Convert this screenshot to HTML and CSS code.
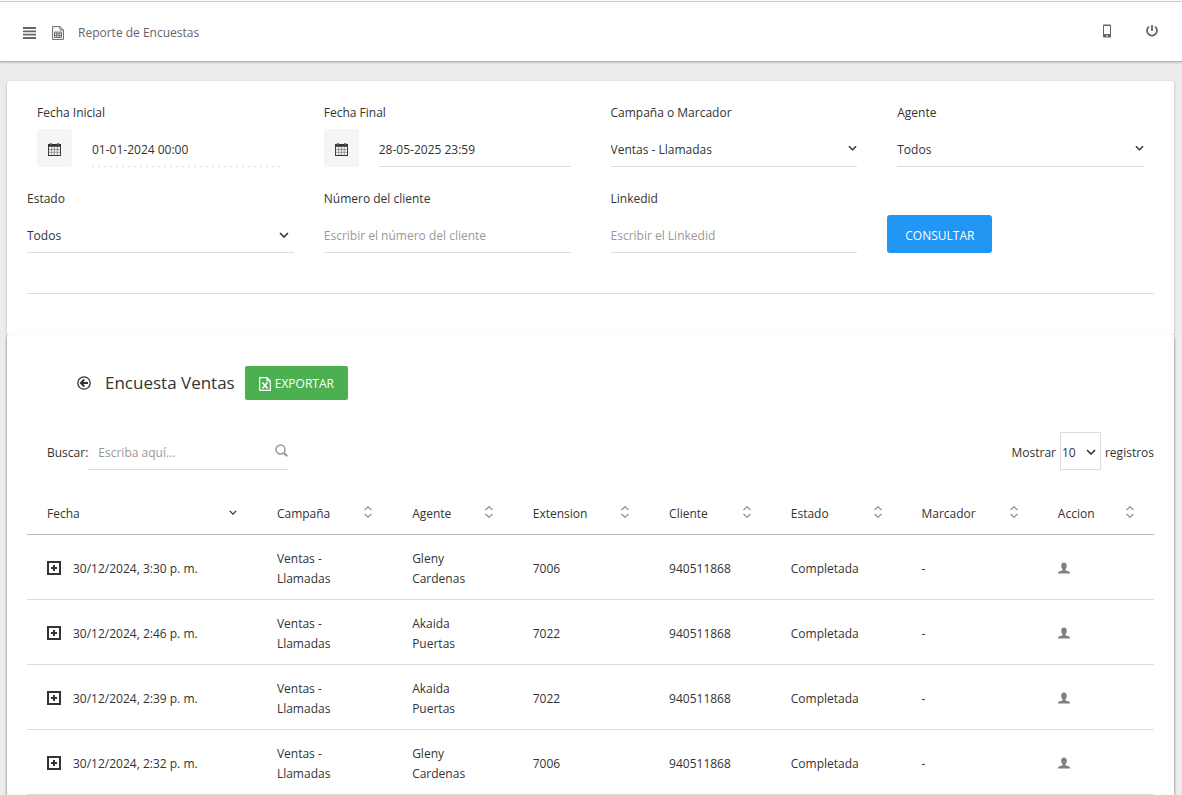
FILE: index.html
```
<!DOCTYPE html>
<html lang="es">
<head>
  <meta charset="UTF-8">
  <meta name="viewport" content="width=device-width, initial-scale=1.0">
  <title>Reporte de Encuestas</title>
  <link rel="stylesheet" href="styles.css">
</head>
<body>
  <!-- Icons -->
  <svg class="sprite" aria-hidden="true">
    <symbol id="calendar" viewBox="0 0 14 14">
      <path d="M0 1h14v13H0z M1 4v9h12V4z" fill="currentColor" fill-rule="evenodd"/>
      <path d="M3 0v3M11 0v3" stroke="currentColor" stroke-width="2"/>
      <path d="M3 0v2M11 0v2" stroke="#f5f5f5" stroke-width="0.6"/>
      <path d="M1 7h12M1 10h12M4 4v9M7 4v9M10 4v9" stroke="currentColor" stroke-width="0.8" opacity="0.6"/>
    </symbol>
    <symbol id="chevron" viewBox="0 0 10 6">
      <path d="M1 1l4 4 4-4" fill="none" stroke="currentColor" stroke-width="1.6"/>
    </symbol>
    <symbol id="sort" viewBox="0 0 8 12">
      <path d="M0.5 4L4 0.8 7.5 4M0.5 8L4 11.2 7.5 8" fill="none" stroke="currentColor" stroke-width="1.4"/>
    </symbol>
    <symbol id="plus-box" viewBox="0 0 14 14">
      <path d="M1 1h12v12H1z" fill="none" stroke="currentColor" stroke-width="2"/>
      <path d="M7 4v6M4 7h6" stroke="currentColor" stroke-width="2"/>
    </symbol>
    <symbol id="user" viewBox="0 0 12 12">
      <path d="M6 0.5c2 0 2.8 1.400 2.800 3.200 0 1.600-.6 2.800-1.400 3.500v1L11 9.500c.7.300 1 .8 1 2H0c0-1.200.3-1.700 1-2l3.600-1.300v-1C3.800 6.500 3.200 5.300 3.200 3.700 3.200 1.900 4 .5 6 .5z" fill="currentColor"/>
    </symbol>
  </svg>

  <header class="navbar">
    <button class="icon-btn" aria-label="Menú">
      <svg width="13" height="12" viewBox="0 0 13 12"><path d="M0 1h13M0 4.300h13M0 7.700h13M0 11h13" stroke="currentColor" stroke-width="1.800"/></svg>
    </button>
    <svg class="navbar-file" width="12" height="14" viewBox="0 0 12 14">
      <path d="M0.6 0.6h7.400l3.400 3.400v9.400H0.600z M8 0.600V4h3.400" fill="none" stroke="currentColor"/>
      <path d="M2.500 6h7v5.500h-7zM2.500 7.800h7M2.500 9.700h7M4.800 6v5.500M7.200 6v5.500" fill="none" stroke="currentColor" stroke-width="0.9"/>
    </svg>
    <span class="navbar-title">Reporte de Encuestas</span>
    <nav class="navbar-right">
      <button class="icon-btn" aria-label="Teléfono">
        <svg width="10" height="14" viewBox="0 0 10 14"><path d="M2 0.500h6a1 1 0 0 1 1 1v11a1 1 0 0 1-1 1H2a1 1 0 0 1-1-1v-11a1 1 0 0 1 1-1zM2 2v8h6V2zM4.200 11.200v1.400h1.600v-1.400z" fill="currentColor" fill-rule="evenodd"/></svg>
      </button>
      <button class="icon-btn" aria-label="Salir">
        <svg width="14" height="14" viewBox="0 0 14 14"><path d="M7 1v6M4 2.600a5 5 0 1 0 6 0" fill="none" stroke="currentColor" stroke-width="1.800"/></svg>
      </button>
    </nav>
  </header>

  <main class="content">
    <section class="card card-filters">
      <form class="filters">
        <div class="field">
          <label for="fecha-inicial">Fecha Inicial</label>
          <div class="date-group">
            <button type="button" class="date-btn" aria-label="Elegir fecha inicial"><svg width="13" height="13"><use href="#calendar"/></svg></button>
            <input class="input dashed" id="fecha-inicial" type="text" value="01-01-2024 00:00">
          </div>
        </div>
        <div class="field">
          <label for="fecha-final">Fecha Final</label>
          <div class="date-group">
            <button type="button" class="date-btn" aria-label="Elegir fecha final"><svg width="13" height="13"><use href="#calendar"/></svg></button>
            <input class="input" id="fecha-final" type="text" value="28-05-2025 23:59">
          </div>
        </div>
        <div class="field">
          <label for="campana">Campaña o Marcador</label>
          <div class="select">
            <select class="input" id="campana"><option>Ventas - Llamadas</option></select>
            <svg class="caret" width="9" height="6"><use href="#chevron"/></svg>
          </div>
        </div>
        <div class="field">
          <label for="agente">Agente</label>
          <div class="select">
            <select class="input" id="agente"><option>Todos</option></select>
            <svg class="caret" width="9" height="6"><use href="#chevron"/></svg>
          </div>
        </div>
        <div class="field field-wide">
          <label for="estado">Estado</label>
          <div class="select select-native">
            <select class="input" id="estado"><option>Todos</option></select>
            <svg class="caret" width="10" height="6"><use href="#chevron"/></svg>
          </div>
        </div>
        <div class="field">
          <label for="numero">Número del cliente</label>
          <input class="input" id="numero" type="text" placeholder="Escribir el número del cliente">
        </div>
        <div class="field">
          <label for="linkedid">Linkedid</label>
          <input class="input" id="linkedid" type="text" placeholder="Escribir el Linkedid">
        </div>
        <div class="field field-wide field-action">
          <button type="button" class="btn btn-primary">CONSULTAR</button>
        </div>
      </form>
      <hr>
    </section>

    <section class="card card-report">
      <div class="report-heading">
        <button class="icon-btn back" aria-label="Volver">
          <svg width="14" height="14" viewBox="0 0 14 14"><circle cx="7" cy="7" r="6.200" fill="none" stroke="currentColor" stroke-width="1.300"/><path d="M11 7H4M7.300 3.500L3.800 7l3.500 3.500" fill="none" stroke="currentColor" stroke-width="1.800"/></svg>
        </button>
        <h1>Encuesta Ventas</h1>
        <button class="btn btn-success">
          <svg width="12" height="14" viewBox="0 0 12 14"><path d="M0.700 0.700h7.300l3.300 3.300v9.300H0.700z M8 0.700V4h3.300" fill="none" stroke="currentColor" stroke-width="1.200"/><path d="M3.500 5.500l5 6M8.500 5.500l-5 6" stroke="currentColor" stroke-width="1.700"/></svg>
          EXPORTAR
        </button>
      </div>

      <div class="table-tools">
        <div class="search">
          <label for="buscar">Buscar:</label>
          <div class="search-box">
            <input class="input" id="buscar" type="text" placeholder="Escriba aquí...">
            <svg class="search-icon" width="13" height="13" viewBox="0 0 13 13"><circle cx="5.500" cy="5.500" r="4.500" fill="none" stroke="currentColor" stroke-width="1.500"/><path d="M8.800 8.800l3.400 3.400" stroke="currentColor" stroke-width="2"/></svg>
          </div>
        </div>
        <div class="length">
          <label for="mostrar">Mostrar</label>
          <div class="select select-native">
            <select class="input boxed" id="mostrar"><option>10</option></select>
            <svg class="caret" width="10" height="6"><use href="#chevron"/></svg>
          </div>
          <span>registros</span>
        </div>
      </div>

      <table>
        <colgroup>
          <col class="col-fecha"><col class="col-campana"><col class="col-agente"><col class="col-extension">
          <col class="col-cliente"><col class="col-estado"><col class="col-marcador"><col class="col-accion">
        </colgroup>
        <thead>
          <tr>
            <th><div class="th">Fecha <svg class="sorted" width="8" height="5"><use href="#chevron"/></svg></div></th>
            <th><div class="th">Campaña <svg width="8" height="12"><use href="#sort"/></svg></div></th>
            <th><div class="th">Agente <svg width="8" height="12"><use href="#sort"/></svg></div></th>
            <th><div class="th">Extension <svg width="8" height="12"><use href="#sort"/></svg></div></th>
            <th><div class="th">Cliente <svg width="8" height="12"><use href="#sort"/></svg></div></th>
            <th><div class="th">Estado <svg width="8" height="12"><use href="#sort"/></svg></div></th>
            <th><div class="th">Marcador <svg width="8" height="12"><use href="#sort"/></svg></div></th>
            <th><div class="th">Accion <svg width="8" height="12"><use href="#sort"/></svg></div></th>
          </tr>
        </thead>
        <tbody>
          <tr>
            <td><div class="date"><button class="icon-btn expand" aria-label="Ver detalle"><svg width="14" height="14"><use href="#plus-box"/></svg></button>30/12/2024, 3:30 p. m.</div></td>
            <td>Ventas - Llamadas</td>
            <td>Gleny Cardenas</td>
            <td>7006</td>
            <td>940511868</td>
            <td>Completada</td>
            <td>-</td>
            <td><button class="icon-btn user" aria-label="Ver cliente"><svg width="12" height="12"><use href="#user"/></svg></button></td>
          </tr>
          <tr>
            <td><div class="date"><button class="icon-btn expand" aria-label="Ver detalle"><svg width="14" height="14"><use href="#plus-box"/></svg></button>30/12/2024, 2:46 p. m.</div></td>
            <td>Ventas - Llamadas</td>
            <td>Akaida Puertas</td>
            <td>7022</td>
            <td>940511868</td>
            <td>Completada</td>
            <td>-</td>
            <td><button class="icon-btn user" aria-label="Ver cliente"><svg width="12" height="12"><use href="#user"/></svg></button></td>
          </tr>
          <tr>
            <td><div class="date"><button class="icon-btn expand" aria-label="Ver detalle"><svg width="14" height="14"><use href="#plus-box"/></svg></button>30/12/2024, 2:39 p. m.</div></td>
            <td>Ventas - Llamadas</td>
            <td>Akaida Puertas</td>
            <td>7022</td>
            <td>940511868</td>
            <td>Completada</td>
            <td>-</td>
            <td><button class="icon-btn user" aria-label="Ver cliente"><svg width="12" height="12"><use href="#user"/></svg></button></td>
          </tr>
          <tr>
            <td><div class="date"><button class="icon-btn expand" aria-label="Ver detalle"><svg width="14" height="14"><use href="#plus-box"/></svg></button>30/12/2024, 2:32 p. m.</div></td>
            <td>Ventas - Llamadas</td>
            <td>Gleny Cardenas</td>
            <td>7006</td>
            <td>940511868</td>
            <td>Completada</td>
            <td>-</td>
            <td><button class="icon-btn user" aria-label="Ver cliente"><svg width="12" height="12"><use href="#user"/></svg></button></td>
          </tr>
        </tbody>
      </table>
    </section>
  </main>
</body>
</html>
```
FILE: styles.css
```
* {
  box-sizing: border-box;
}

body {
  margin: 0;
  background: #ececec;
  color: #333;
  font-family: "Segoe UI", "Open Sans", "Noto Sans", sans-serif;
  font-size: 12px;
  line-height: 20px;
}

button, input, select {
  font: inherit;
  color: inherit;
}

svg {
  display: block;
  flex: none;
}

.sprite {
  position: absolute;
  width: 0;
  height: 0;
}

.icon-btn {
  display: flex;
  padding: 0;
  border: none;
  background: none;
  cursor: pointer;
}

/* Top bar */
.navbar {
  display: flex;
  align-items: center;
  height: 62px;
  padding: 4px 23px 0;
  background: #fff;
  color: #666;
  border-top: 1px solid #fafafa;
  border-bottom: 1px solid #b4b4b4;
  box-shadow: inset 0 1px 0 #ccc, 0 1px 2px rgba(0, 0, 0, 0.15);
}

.navbar-file {
  margin: 0 14px 0 16px;
}

.navbar-right {
  display: flex;
  gap: 33px;
  margin: 0 0 4px auto;
}

.content {
  padding: 19px 8px 0 7px;
}

/* Cards */
.card {
  padding: 0 20px;
  background: #fff;
  border-radius: 3px 3px 0 0;
}

.card hr {
  height: 1px;
  margin: 40px 0 0;
  border: none;
  background: #ddd;
}

.card-filters {
  padding-top: 22px;
  padding-bottom: 40px;
  box-shadow: 0 1px 3px rgba(0, 0, 0, 0.25);
}

.card-report {
  padding-top: 32px;
  box-shadow: 0 2px 3px rgba(0, 0, 0, 0.6);
}

/* Filters */
.filters {
  display: grid;
  grid-template-columns: repeat(4, 1fr);
  row-gap: 22px;
  margin: 0 -10px;
}

.field {
  display: flex;
  flex-direction: column;
  gap: 6px;
  min-width: 0;
  padding: 0 20px;
}

.field-wide {
  padding: 0 10px;
}

.field-action {
  align-items: flex-start;
  justify-content: flex-end;
}

.input {
  display: block;
  width: 100%;
  height: 38px;
  padding: 4px 0 0;
  border: none;
  border-bottom: 1px solid #ddd;
  border-radius: 0;
  background: none;
  outline: none;
  appearance: none;
}

.input::placeholder {
  color: #999;
  opacity: 1;
}

.input.dashed {
  border-bottom-color: transparent;
  background: repeating-linear-gradient(90deg, #ddd 0 2px, transparent 2px 6px) bottom / 100% 1px no-repeat border-box;
}

.date-group {
  display: flex;
  gap: 20px;
}

.date-btn {
  display: flex;
  flex: none;
  align-items: center;
  justify-content: center;
  width: 35px;
  height: 38px;
  padding: 2px 0 0;
  border: none;
  border-radius: 3px;
  background: #f5f5f5;
}

.select {
  position: relative;
}

.caret {
  position: absolute;
  top: 16px;
  right: 0;
  pointer-events: none;
}

.select-native .caret {
  top: 17px;
  right: 5px;
}

.btn {
  display: flex;
  align-items: center;
  justify-content: center;
  border: none;
  border-radius: 3px;
  color: #fff;
  cursor: pointer;
}

.btn-primary {
  height: 38px;
  padding: 4px 18px 0;
  background: #2196f3;
}

.btn-success {
  gap: 4px;
  height: 34px;
  padding: 2px 14px 0;
  border-radius: 2px;
  background: #4caf50;
}

/* Report */
.report-heading {
  display: flex;
  align-items: center;
  padding-left: 50px;
}

.report-heading h1 {
  margin: 0 10px 0 14px;
  font-size: 17px;
  font-weight: 400;
}

.table-tools {
  display: flex;
  justify-content: space-between;
  margin: 32px 0 20px;
}

.search,
.length {
  display: flex;
  align-items: center;
}

.search label,
.length label,
.length span {
  padding-top: 4px;
}

.search {
  padding-left: 20px;
}

.search-box {
  position: relative;
  width: 200px;
}

.search-box .input {
  padding-left: 10px;
}

.search-icon {
  position: absolute;
  top: 12px;
  right: 0;
  color: #999;
}

.length {
  gap: 4px;
}

.input.boxed {
  width: 41px;
  padding-left: 1px;
  border: 1px solid #ddd;
}

table {
  width: 100%;
  table-layout: fixed;
  border-collapse: separate;
  border-spacing: 0;
}

.col-fecha { width: 20.4%; }
.col-campana { width: 12%; }
.col-agente { width: 10.7%; }
.col-extension { width: 12.1%; }
.col-cliente { width: 10.8%; }
.col-estado { width: 11.6%; }
.col-marcador { width: 12.1%; }
.col-accion { width: 10.3%; }

th,
td {
  padding: 14px 20px 10px;
  font-weight: 400;
  text-align: left;
  vertical-align: middle;
  border-bottom: 1px solid #ddd;
}

th {
  border-bottom-color: #bbb;
}

.th {
  display: flex;
  align-items: center;
  justify-content: space-between;
}

.th svg {
  margin-bottom: 4px;
  color: #999;
}

.th .sorted {
  color: #333;
}

.date {
  display: flex;
  align-items: center;
  gap: 12px;
  white-space: nowrap;
}

.expand,
.user {
  margin-bottom: 2px;
}

.user {
  color: #808080;
}
```
